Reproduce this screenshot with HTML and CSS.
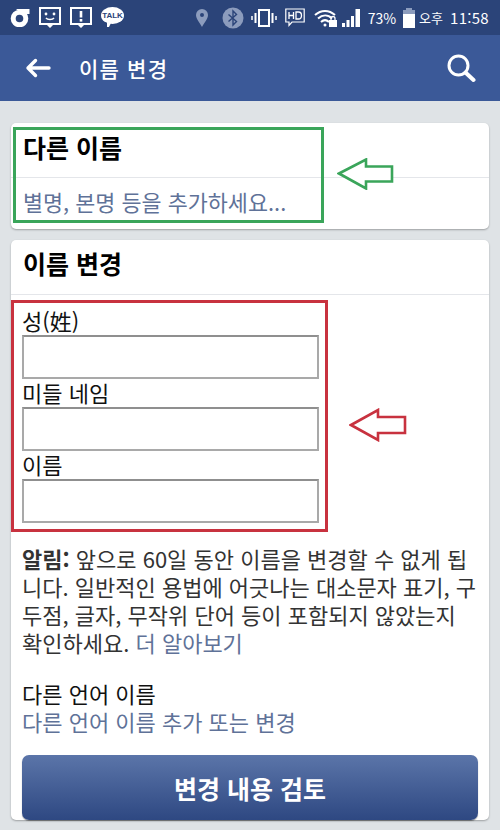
FILE: index.html
```html
<!DOCTYPE html>
<html lang="ko">
<head>
  <meta charset="UTF-8">
  <title>이름 변경</title>
  <link rel="stylesheet" href="styles.css">
</head>
<body>
  <div class="statusbar">
    <div class="status-left">
      <svg width="20" height="20" viewBox="0 0 20 20"><circle cx="9.500" cy="11.500" r="6.300" fill="none" stroke="#fff" stroke-width="5"/><path d="M6 2h13.500v5H12z" fill="#fff"/></svg>
      <svg width="22" height="21" viewBox="0 0 22 21"><path d="M0 0h22v18h-8l-3 3-3-3H0z" fill="#fff"/><rect x="2" y="2" width="18" height="14" fill="#2b4479"/><circle cx="7" cy="7" r="1.400" fill="#fff"/><circle cx="15" cy="7" r="1.400" fill="#fff"/><path d="M7 11c1.500 2 6.500 2 8 0" stroke="#fff" stroke-width="1.500" fill="none"/></svg>
      <svg width="22" height="21" viewBox="0 0 22 21"><path d="M0 0h22v18h-8l-3 3-3-3H0z" fill="#fff"/><rect x="2" y="2" width="18" height="14" fill="#2b4479"/><rect x="9.700" y="4" width="2.600" height="6.500" fill="#fff"/><rect x="9.700" y="12" width="2.600" height="2.600" fill="#fff"/></svg>
      <div class="talk"><span class="talk-text">TALK</span><i class="talk-tail"></i></div>
    </div>
    <div class="status-right">
      <svg width="14" height="20" viewBox="0 0 14 20"><path fill-rule="evenodd" d="M7 1a6 6 0 0 1 6 6c0 4-4 8-6 12C5 15 1 11 1 7a6 6 0 0 1 6-6zm0 4a2 2 0 1 0 0 4 2 2 0 0 0 0-4z" fill="#8c9cbd"/></svg>
      <svg class="bt" width="22" height="22" viewBox="0 0 22 22"><circle cx="11" cy="11" r="10.500" fill="#8c9cbd"/><path d="M6.500 7.500l8 7-3.500 3.500V4l3.500 3.500-8 7" stroke="#2b4479" stroke-width="1.400" fill="none"/></svg>
      <svg class="vib" width="26" height="20" viewBox="0 0 26 20"><rect x="8" y="2" width="10" height="16" fill="none" stroke="#fff" stroke-width="2"/><path d="M4.500 5v10M21.500 5v10" stroke="#fff" stroke-width="2"/><path d="M1 8v4M25 8v4" stroke="#fff" stroke-width="1.500"/></svg>
      <svg class="hd" width="20" height="20" viewBox="0 0 20 20"><path d="M.8 1h18.400v13H7l-3 3.500V14H.8z" fill="none" stroke="#fff" stroke-width="1.200"/><path d="M4 4v7M8.500 4v7M4 7.500h4.500M11 4v7h2.500c2 0 3-1.500 3-3.500S15.500 4 13.500 4z" fill="none" stroke="#fff" stroke-width="1.300"/></svg>
      <svg class="wifi" width="24" height="20" viewBox="0 0 24 20"><path d="M1 7c6-5.500 14-5.500 20 0M4 10.500c4.500-4 10-4 14 0M7 14c2.500-2.300 5.500-2.300 8 0" fill="none" stroke="#fff" stroke-width="2"/><circle cx="11" cy="17" r="1.500" fill="#fff"/><rect x="15" y="12" width="8" height="7" fill="#fff"/><path d="M17 12v-1.500a2 2 0 0 1 4 0V12" fill="none" stroke="#fff" stroke-width="1.300"/></svg>
      <svg class="signal" width="20" height="20" viewBox="0 0 20 20"><path d="M1 15h3v4H1zM5.500 12h3v7h-3zM10 8h3v11h-3zM14.500 1H19v18h-4.500z" fill="#fff"/></svg>
      <span class="pct">73%</span>
      <svg class="batt" width="14" height="20" viewBox="0 0 14 20"><rect x="4" y="0" width="6" height="3" fill="#8c9cbd"/><rect x="1" y="2" width="12" height="4" fill="#8c9cbd"/><rect x="1" y="6" width="12" height="14" fill="#fff"/></svg>
      <span class="ampm">오후</span>
      <span class="clock">11:58</span>
    </div>
  </div>

  <header class="topbar">
    <svg class="back" width="26" height="20" viewBox="0 0 26 20"><path d="M3 10h21M10.500 2.500L3 10l7.500 7.500" fill="none" stroke="#fff" stroke-width="3.400" stroke-linecap="round" stroke-linejoin="round"/></svg>
    <span class="title">이름 변경</span>
    <svg class="search" width="30" height="30" viewBox="0 0 30 30"><circle cx="12.500" cy="12.500" r="9.500" fill="none" stroke="#fff" stroke-width="3"/><path d="M19.500 19.500L27.500 27" stroke="#fff" stroke-width="4" stroke-linecap="round"/></svg>
  </header>

  <main class="content">
    <section class="card card-other">
      <h2 class="card-title other-title">다른 이름</h2>
      <a class="other-link">별명, 본명 등을 추가하세요...</a>
      <div class="mark-green"></div>
      <svg class="arrow-green" width="58" height="32" viewBox="0 0 58 32"><path d="M2 15.500L29 1.500v7h26v15H29v7z" fill="#fff" stroke="#3aa55a" stroke-width="2.600"/></svg>
    </section>

    <section class="card card-name">
      <h2 class="card-title name-title">이름 변경</h2>
      <div class="fields">
        <label class="field-label">성(姓)</label>
        <input class="field-input" type="text">
        <label class="field-label">미들 네임</label>
        <input class="field-input" type="text">
        <label class="field-label">이름</label>
        <input class="field-input" type="text">
      </div>
      <svg class="arrow-red" width="58" height="34" viewBox="0 0 58 34"><path d="M2 17L29 2v7h27v16H29v7z" fill="#fff" stroke="#c8323f" stroke-width="2.600"/></svg>

      <p class="notice"><b>알림:</b> 앞으로 60일 동안 이름을 변경할 수 없게 됩니다. 일반적인 용법에 어긋나는 대소문자 표기, 구두점, 글자, 무작위 단어 등이 포함되지 않았는지 확인하세요. <a class="link">더 알아보기</a></p>

      <div class="other-lang">
        <div>다른 언어 이름</div>
        <a class="link">다른 언어 이름 추가 또는 변경</a>
      </div>

      <button class="submit">변경 내용 검토</button>
    </section>
  </main>
</body>
</html>
```

FILE: styles.css
```css
:root {
  --status-bg: #2b4479;
  --header-bg: #3b5998;
  --page-bg: #dfe3e6;
  --link: #5f7298;
  --line: #e4e6ea;
}

* {
  box-sizing: border-box;
}

html,
body {
  height: 830px;
  overflow: hidden;
}

body {
  margin: 0;
  background: var(--page-bg);
  font-family: "Noto Sans CJK KR", "Noto Sans", sans-serif;
  color: #111;
}

.statusbar {
  height: 35px;
  padding: 7px 11px 0 10px;
  display: flex;
  justify-content: space-between;
  align-items: flex-start;
  background: var(--status-bg);
}

.status-left {
  display: flex;
  align-items: flex-start;
  gap: 9px;
}

.talk {
  position: relative;
  width: 23px;
  height: 17px;
  border-radius: 50%;
  background: #fff;
  display: flex;
  align-items: center;
  justify-content: center;
}

.talk-text {
  font: bold 8px "Liberation Sans", sans-serif;
  color: #2b4479;
}

.talk-tail {
  position: absolute;
  left: 6px;
  top: 14px;
  border-left: 2px solid #fff;
  border-right: 3px solid transparent;
  border-top: 6px solid #fff;
}

.status-right {
  display: flex;
  align-items: center;
  color: #fff;
}

.bt {
  margin-left: 13px;
}

.vib {
  margin-left: 7px;
}

.hd {
  margin-left: 8px;
}

.wifi {
  margin-left: 9px;
}

.signal {
  margin-left: 3px;
}

.pct {
  margin-left: 7px;
  font-size: 14px;
  line-height: 20px;
}

.batt {
  margin-left: 6px;
}

.ampm {
  margin-left: 3px;
  font-size: 13px;
  line-height: 20px;
}

.clock {
  margin-left: 7px;
  font-size: 15px;
  line-height: 20px;
  letter-spacing: 0.3px;
}

.topbar {
  height: 66px;
  padding: 0 24px 0 25px;
  display: flex;
  align-items: center;
  background: var(--header-bg);
  color: #fff;
}

.title {
  margin-left: 28px;
  font-size: 21px;
  font-weight: 500;
  letter-spacing: 1.2px;
}

.search {
  margin-left: auto;
}

.content {
  padding: 22px 11px 0;
}

.card {
  position: relative;
  background: #fff;
  border-radius: 5px;
  box-shadow: 0 1px 2px rgba(0, 0, 0, 0.3);
}

.card-other {
  height: 106px;
  margin-bottom: 11px;
}

.card-title {
  margin: 0;
  padding-left: 12px;
  font-size: 25px;
  font-weight: 700;
  color: #000;
  border-bottom: 1px solid var(--line);
}

.other-title {
  height: 55px;
  line-height: 48px;
}

.other-link {
  display: block;
  padding: 9px 0 0 12px;
  font-size: 21.800px;
  line-height: 30px;
  color: var(--link);
}

.mark-green {
  position: absolute;
  left: 2px;
  top: 4px;
  width: 311px;
  height: 96px;
  border: 3px solid #3aa55a;
}

.arrow-green {
  position: absolute;
  left: 326px;
  top: 35px;
}

.name-title {
  height: 55px;
  line-height: 46px;
}

.fields {
  width: 317px;
  margin: 5px 0 0;
  padding: 4px 7px 6px 8px;
  border: 3px solid #c8323f;
  display: flex;
  flex-direction: column;
}

.field-label {
  font-size: 22px;
  line-height: 28px;
  height: 28px;
  margin-top: -1px;
  margin-bottom: 1px;
}

.field-input {
  display: block;
  width: 297px;
  height: 44px;
  border: 2px solid #a9a9a9;
  border-top-color: #8f8f8f;
  background: #fff;
}

.arrow-red {
  position: absolute;
  left: 338px;
  top: 168px;
}

.notice {
  margin: 12px 12px 0 11px;
  font-size: 22px;
  line-height: 28px;
  color: #333;
}

.link {
  color: var(--link);
}

.other-lang {
  margin: 23px 11px 0;
  font-size: 22px;
  line-height: 28px;
}

.submit {
  display: block;
  width: 456px;
  height: 65px;
  margin: 20px 0 30px 11px;
  border: none;
  border-radius: 7px;
  background: linear-gradient(#5b75a9, #2e4882);
  box-shadow: 0 1px 1px rgba(0, 0, 0, 0.4);
  font-family: inherit;
  font-size: 25px;
  font-weight: 700;
  color: #fff;
}
```
